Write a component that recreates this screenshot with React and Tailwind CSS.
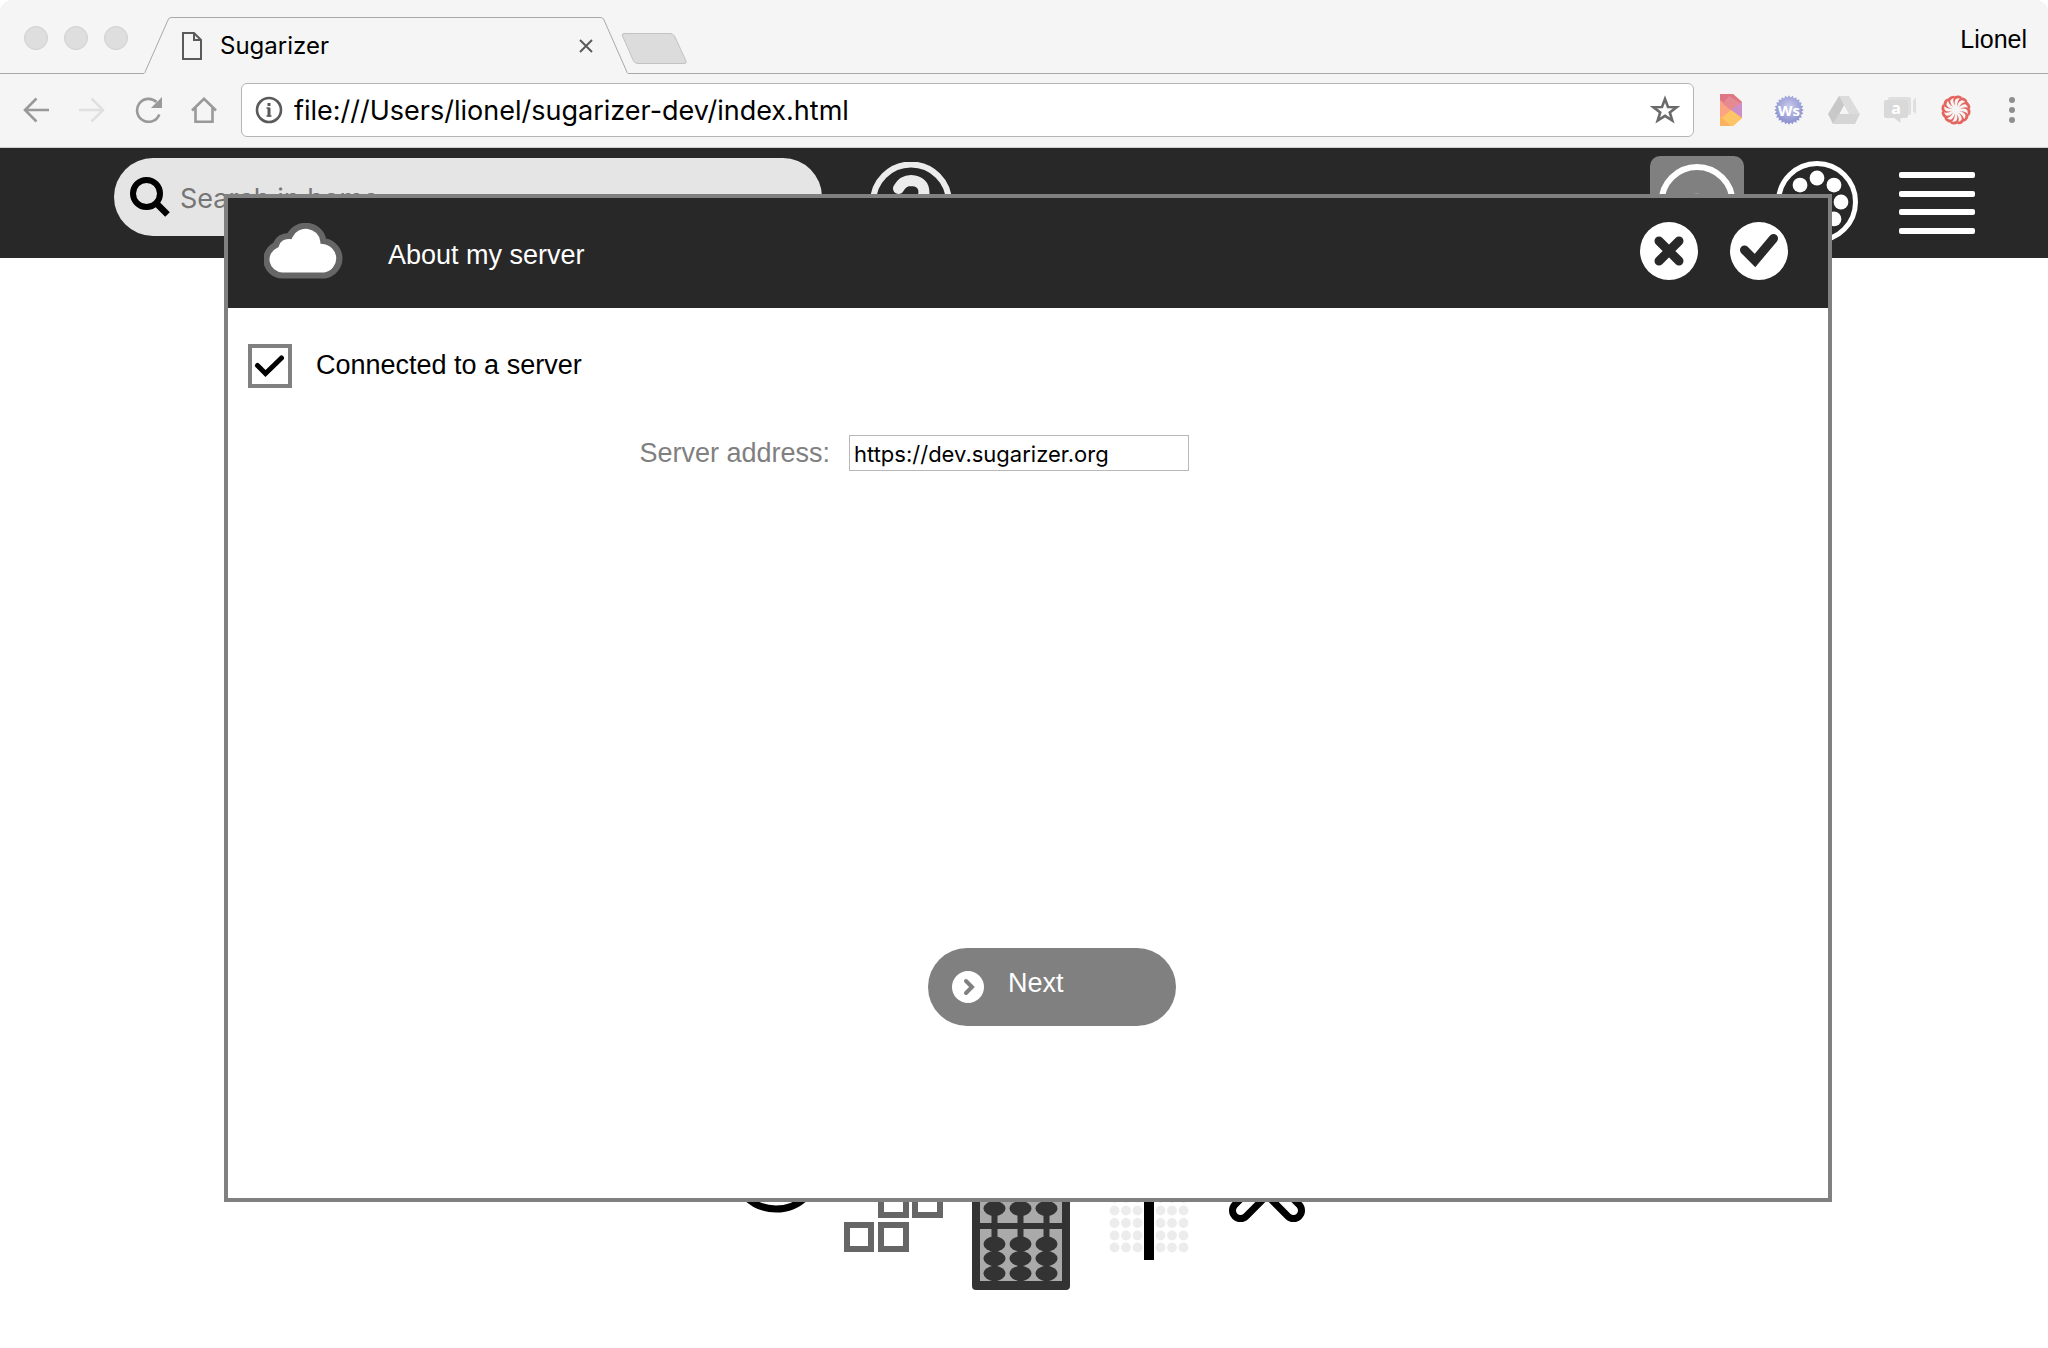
import React from "react";

const ring = (count, radius, cx, cy) =>
  Array.from({ length: count }, (_, i) => {
    const a = (i / count) * Math.PI * 2;
    return [cx + radius * Math.sin(a), cy - radius * Math.cos(a)];
  });

const gearPoints = Array.from({ length: 48 }, (_, i) => {
  const a = (i / 48) * Math.PI * 2;
  const r = i % 2 ? 12.6 : 14.8;
  return `${(15 + r * Math.sin(a)).toFixed(1)},${(15 - r * Math.cos(a)).toFixed(1)}`;
}).join(" ");

function TabStrip() {
  return (
    <div className="flex h-[74px] items-end">
      <div className="flex h-full w-36 gap-4 border-b border-[#a9a9a9] pl-6 pt-[26px]">
        {["Close", "Minimize", "Zoom"].map((name) => (
          <button key={name} aria-label={name} className="size-6 rounded-full border border-[#cfcfcf] bg-[#dedede]" />
        ))}
      </div>
      <svg width="27" height="57" viewBox="0 0 27 57" fill="none" stroke="#a9a9a9">
        <path d="M0 56.5 Q1 56 1.5 54 L24 3 Q25 0.5 27 0.5" />
      </svg>
      <div className="flex h-[57px] w-[430px] items-center border-t border-[#a9a9a9] pl-[11px] pr-2">
        <svg width="20" height="28" viewBox="0 0 20 28" fill="none" stroke="#5a5a5a" strokeWidth="2">
          <path d="M1 1H12L19 8V27H1Z M12 1V8H19" />
        </svg>
        <span className="ml-[18px] text-2xl">Sugarizer</span>
        <button aria-label="Close tab" className="ml-auto">
          <svg width="14" height="14" viewBox="0 0 14 14" stroke="#5a5a5a" strokeWidth="2">
            <path d="M1 1L13 13M13 1L1 13" />
          </svg>
        </button>
      </div>
      <svg width="27" height="57" viewBox="0 0 27 57" fill="none" stroke="#a9a9a9">
        <path d="M0 0.5 Q2 0.5 3 3 L25.5 54 Q26 56 27 56.5" />
      </svg>
      <div className="flex h-full flex-1 justify-between border-b border-[#a9a9a9] pr-[21px]">
        <button aria-label="New tab" className="mt-8 h-8">
          <svg className="-ml-[7px]" width="67" height="33" viewBox="0 0 67 33" fill="#dcdcdc" stroke="#c2c2c2">
            <path d="M3 1.5H49Q52 1.5 53.5 4L65 29Q66 31.5 63 31.5H17Q14 31.5 12.5 29L1.5 4Q.5 1.5 3 1.5Z" />
          </svg>
        </button>
        <button className="mt-[23px] h-8 font-['Liberation_Sans',sans-serif] text-[25px] leading-8">Lionel</button>
      </div>
    </div>
  );
}

function Extensions() {
  return (
    <>
      <button aria-label="Prism extension" className="ml-[26px]">
        <svg width="22" height="32" viewBox="0 0 22 32">
          <path d="M0 0H13L22 8V24L13 32H0Z" fill="#fba479" />
          <path d="M0 0H13L22 8L11 16L0 6Z" fill="#df7683" />
          <path d="M0 13L9 2L22 10L11 16Z" fill="#e58a92" />
          <path d="M22 8V24L11 16Z" fill="#cb8fcb" />
          <path d="M0 8L11 16L0 26Z" fill="#fca382" />
          <path d="M11 16L22 24L13 32H0V25Z" fill="#fdc566" />
          <path d="M0 22L11 32H0Z" fill="#fbb15e" />
        </svg>
      </button>
      <button aria-label="Web sockets extension" className="ml-8">
        <svg width="30" height="30" viewBox="0 0 30 30">
          <defs>
            <radialGradient id="badge" cx=".5" cy=".4" r=".55">
              <stop offset="0" stopColor="#c9cbea" />
              <stop offset="1" stopColor="#8a90d0" />
            </radialGradient>
          </defs>
          <polygon points={gearPoints} fill="url(#badge)" />
          <text x="15" y="21" textAnchor="middle" fontSize="15" fontWeight="700" fontFamily="Open Sans, sans-serif" fill="#fff">Ws</text>
        </svg>
      </button>
      <button aria-label="Drive" className="ml-6">
        <svg width="32" height="28" viewBox="0 0 32 28">
          <path d="M11 0H21L11 19L5 28L0 18Z" fill="#c8c8c8" />
          <path d="M11 0H21L32 18H21Z" fill="#dcdcdc" />
          <path d="M10.500 18H32L27 28H5Z" fill="#d5d5d5" />
          <path d="M16 10L20.500 18H11.500Z" fill="#f5f5f5" />
        </svg>
      </button>
      <button aria-label="Chat extension" className="ml-6">
        <svg width="32" height="28" viewBox="0 0 32 28">
          <path d="M6 1H25Q27 1 27 3V17Q27 19 25 19H4V3Q4 1 6 1Z" fill="#dfdfdf" />
          <path d="M2 4H22Q24 4 24 6V20Q24 22 22 22H16.500V27L10 22H2Q0 22 0 20V6Q0 4 2 4Z" fill="#d9d9d9" />
          <path d="M29 5L32 1V18L29 15Z" fill="#dedede" />
          <text x="12" y="18" textAnchor="middle" fontSize="16" fontWeight="700" fontFamily="Open Sans, sans-serif" fill="#fff">a</text>
        </svg>
      </button>
      <button aria-label="Spiral extension" className="ml-[25px]">
        <svg width="30" height="30" viewBox="0 0 30 30" fill="#e4655e">
          {Array.from({ length: 12 }, (_, i) => (
            <path
              key={i}
              transform={`rotate(${i * 30} 15 15)`}
              d="M14.500 11.500Q10.500 6 13.500 1.200Q17.500 -.400 20.500 1.600L20 3.700Q17 2.700 14.800 4Q12.600 7 14.500 11.500Z"
            />
          ))}
        </svg>
      </button>
      <button aria-label="Browser menu" className="ml-[38px]">
        <svg width="6" height="26" viewBox="0 0 6 26" fill="#8f8f8f">
          <circle cx="3" cy="3" r="3" />
          <circle cx="3" cy="13" r="3" />
          <circle cx="3" cy="23" r="3" />
        </svg>
      </button>
    </>
  );
}

function AddressBar() {
  return (
    <div className="flex h-[74px] items-center border-b border-[#cfcfcf] pb-0.5 pl-[23px] pr-[33px]">
      <button aria-label="Back">
        <svg width="26" height="26" viewBox="0 0 26 26" fill="none" stroke="#999" strokeWidth="2.600">
          <path d="M26 13H2M13.500 1.500L2 13L13.500 24.500" />
        </svg>
      </button>
      <button aria-label="Forward" className="ml-[30px]">
        <svg width="26" height="26" viewBox="0 0 26 26" fill="none" stroke="#e0e0e0" strokeWidth="2.600">
          <path d="M0 13H24M12.500 1.500L24 13L12.500 24.500" />
        </svg>
      </button>
      <button aria-label="Reload" className="ml-[30px]">
        <svg width="28" height="26" viewBox="0 0 28 26" fill="none">
          <path d="M21.500 5A11.500 11.500 0 1 0 24.300 17.500" stroke="#999" strokeWidth="2.600" />
          <path d="M27 0V11H16Z" fill="#999" />
        </svg>
      </button>
      <button aria-label="Home page" className="ml-7">
        <svg width="26" height="26" viewBox="0 0 26 26" fill="none" stroke="#999" strokeWidth="2.600">
          <path d="M1 13.500L13 1.800L25 13.500M4.500 11V24.700H21.500V11" />
        </svg>
      </button>
      <div className="ml-6 flex h-[54px] flex-1 items-center rounded-md border border-[#b5b5b5] bg-white px-[13px]">
        <svg width="28" height="28" viewBox="0 0 28 28" fill="none" stroke="#5a5a5a">
          <circle cx="14" cy="14" r="12" strokeWidth="2.600" />
          <path d="M11.500 12H14V20.500M11.500 20H16.500" strokeWidth="1.500" />
          <path d="M14 12V20.500M14 7V10" strokeWidth="3" />
        </svg>
        <input
          aria-label="Address"
          className="ml-[11px] h-10 min-w-0 flex-1 bg-transparent pt-1 text-[27px] text-black outline-none"
          defaultValue="file:///Users/lionel/sugarizer-dev/index.html"
        />
        <button aria-label="Bookmark this page">
          <svg width="30" height="30" viewBox="0 0 30 30" fill="none" stroke="#6a6a6a" strokeWidth="2.600">
            <path d="M15 4L18 12L26.500 12.200L19.800 17.400L22.300 25.500L15 20.800L7.700 25.500L10.200 17.400L3.500 12.200L12 12Z" />
          </svg>
        </button>
      </div>
      <Extensions />
    </div>
  );
}

function HomeToolbar() {
  return (
    <div className="flex h-[110px] items-start bg-[#282828] pl-[114px] pr-[73px] pt-2">
      <label className="mt-0.5 flex h-[78px] w-[708px] items-center rounded-full bg-[#e5e5e5] pl-4">
        <svg width="40" height="40" viewBox="0 0 40 40" fill="none" stroke="#000">
          <circle cx="16.500" cy="16.500" r="13.500" strokeWidth="6" />
          <path d="M25.500 25.500L37.500 37.500" strokeWidth="6.500" />
        </svg>
        <input
          aria-label="Search in home"
          placeholder="Search in home"
          className="ml-2.5 h-12 min-w-0 flex-1 bg-transparent pt-0.5 text-[27px] outline-none placeholder:text-[#757575]"
        />
      </label>
      <button aria-label="Help" className="ml-12 mt-1.5">
        <svg width="82" height="82" viewBox="0 0 82 82" fill="none" stroke="#ececec">
          <circle cx="41" cy="40.500" r="38" strokeWidth="6" />
          <path d="M28.500 26.500Q33 18.500 41 18.500Q54 19 54 31Q53 41 41 45V51" strokeWidth="11" strokeLinecap="round" />
          <circle cx="41" cy="63" r="2" strokeWidth="7" />
        </svg>
      </button>
      <button aria-label="Home" className="ml-auto size-[94px] rounded-[10px] bg-[#808080]">
        <svg width="94" height="94" viewBox="0 0 94 94" fill="none">
          <circle cx="47" cy="46.500" r="35.500" stroke="#fff" strokeWidth="6" />
          <circle cx="47" cy="42" r="5" fill="#999" />
        </svg>
      </button>
      <button aria-label="Neighborhood" className="ml-8 mt-[5px]">
        <svg width="82" height="82" viewBox="0 0 82 82">
          <circle cx="41" cy="41" r="38.500" fill="none" stroke="#fff" strokeWidth="5" />
          {ring(8, 24, 41, 41).map(([x, y]) => (
            <circle key={`${x}${y}`} cx={x} cy={y} r="7.400" fill="#fff" />
          ))}
        </svg>
      </button>
      <button aria-label="List view" className="ml-[41px] mt-4">
        <svg width="76" height="62" viewBox="0 0 76 62" fill="#fff">
          <rect y="0" width="76" height="6" rx="2" />
          <rect y="19" width="76" height="6" rx="2" />
          <rect y="37" width="76" height="6" rx="2" />
          <rect y="56" width="76" height="6" rx="2" />
        </svg>
      </button>
    </div>
  );
}

function ServerDialog() {
  return (
    <div
      role="dialog"
      aria-label="About my server"
      className="absolute left-56 right-[216px] top-[46px] border-4 border-[#808080] bg-white font-['Liberation_Sans',sans-serif] text-[27px] leading-8"
    >
      <header className="flex h-[110px] items-center bg-[#282828] pb-1 pl-9 pr-10 text-white">
        <svg width="80" height="56" viewBox="0 0 80 56">
          <path
            d="M19 52.500A16 16 0 0 1 13 22A12 12 0 0 1 26 13A17 17 0 0 1 58.500 18A17.500 17.500 0 0 1 60 52.500Z"
            fill="#fff"
            stroke="#666"
            strokeWidth="6"
            transform="translate(-1.500 0) scale(1.040 1)"
          />
        </svg>
        <h1 className="ml-11 pt-2">About my server</h1>
        <button aria-label="Cancel" className="ml-auto">
          <svg width="58" height="58" viewBox="0 0 58 58">
            <circle cx="29" cy="29" r="29" fill="#fff" />
            <path d="M19 19L39 39M39 19L19 39" stroke="#282828" strokeWidth="9" strokeLinecap="round" />
          </svg>
        </button>
        <button aria-label="Validate" className="ml-8">
          <svg width="58" height="58" viewBox="0 0 58 58" fill="none">
            <circle cx="29" cy="29" r="29" fill="#fff" />
            <path d="M14.500 28L25 38.500L43.500 16.500" stroke="#282828" strokeWidth="9" strokeLinecap="round" />
          </svg>
        </button>
      </header>
      <div className="flex flex-col px-5 pb-[172px] pt-9">
        <label className="flex items-center">
          <span className="grid size-11">
            <input
              type="checkbox"
              defaultChecked
              className="col-start-1 row-start-1 size-11 appearance-none border-4 border-[#808080] bg-white"
            />
            <svg className="pointer-events-none col-start-1 row-start-1" width="44" height="44" viewBox="0 0 44 44" fill="none">
              <path d="M9.500 21.500L17.500 29.500L33.500 14" stroke="#000" strokeWidth="5" strokeLinecap="round" />
            </svg>
          </span>
          <span className="ml-6 pb-0.5">Connected to a server</span>
        </label>
        <div className="mt-[47px] flex items-center">
          <label htmlFor="server-address" className="w-[582px] text-right text-[#808080]">
            Server address:
          </label>
          <input
            id="server-address"
            type="text"
            defaultValue="https://dev.sugarizer.org"
            className="ml-[19px] h-9 w-[340px] border border-[#b8b8b8] bg-white px-1 pt-0.5 font-['Inter',sans-serif] text-[22px] text-black outline-none"
          />
        </div>
        <button className="ml-[680px] mt-[477px] flex h-[78px] w-[248px] items-center rounded-full bg-[#808080] pl-6 text-white">
          <svg width="32" height="32" viewBox="0 0 32 32" fill="none">
            <circle cx="16" cy="16" r="16" fill="#fff" />
            <path d="M14 10L20 16L14 22" stroke="#808080" strokeWidth="4" strokeLinecap="round" />
          </svg>
          <span className="ml-6 pb-2">Next</span>
        </button>
      </div>
    </div>
  );
}

function ActivityIcons() {
  return (
    <div className="mx-auto mt-[892px] flex w-[618px]">
      <button aria-label="Clock activity">
        <svg width="120" height="140" viewBox="0 0 120 140" fill="none">
          <circle cx="61" cy="16" r="43" stroke="#000" strokeWidth="7" />
        </svg>
      </button>
      <button aria-label="Blocks activity">
        <svg width="120" height="140" viewBox="0 0 120 140" fill="none" stroke="#666" strokeWidth="6">
          <rect x="12" y="75" width="24" height="24" />
          <rect x="46" y="75" width="25" height="24" />
          <rect x="46" y="41" width="25" height="24" />
          <rect x="80" y="41" width="25" height="24" />
        </svg>
      </button>
      <button aria-label="Abacus activity">
        <svg width="130" height="140" viewBox="0 0 130 140" fill="#333">
          <rect x="17" y="10" width="98" height="130" rx="4" />
          <rect x="25" y="18" width="82" height="113" fill="#aaa" />
          <rect x="25" y="73" width="82" height="6" />
          {[39.5, 65.5, 91.5].map((x) => (
            <g key={x}>
              <rect x={x - 3} y="18" width="6" height="113" />
              {[58.5, 94, 108.5, 123.5].map((y) => (
                <ellipse key={y} cx={x} cy={y} rx="11" ry="7.500" />
              ))}
            </g>
          ))}
        </svg>
      </button>
      <button aria-label="Dots activity">
        <svg width="125" height="140" viewBox="0 0 125 140" fill="#ececec">
          {[29.5, 41, 52.5, 75.5, 87, 98.5].map((x) =>
            [48, 60.5, 73, 85.5, 97.5].map((y) => <circle key={`${x}-${y}`} cx={x} cy={y} r="4.900" />)
          )}
          <rect x="59" y="20" width="10" height="90" fill="#000" />
        </svg>
      </button>
      <button aria-label="Buddy activity">
        <svg width="123" height="140" viewBox="0 0 123 140" fill="none" strokeLinecap="round">
          <path d="M30.500 60.500L83 8M83.500 60.500L31 8" stroke="#000" strokeWidth="23" />
          <path d="M30.500 60.500L83 8M83.500 60.500L31 8" stroke="#fff" strokeWidth="9" />
        </svg>
      </button>
    </div>
  );
}

export default function App() {
  return (
    <div className="min-h-screen bg-white font-['Inter',sans-serif] text-black">
      <div className="rounded-t-xl bg-[#f5f5f5]">
        <TabStrip />
        <AddressBar />
      </div>
      <main className="relative">
        <HomeToolbar />
        <ActivityIcons />
        <ServerDialog />
      </main>
    </div>
  );
}
